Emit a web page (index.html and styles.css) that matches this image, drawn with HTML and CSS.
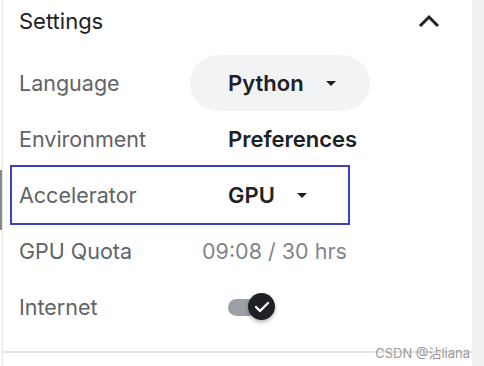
FILE: index.html
```html
<!DOCTYPE html>
<html>
<head>
	<meta charset="utf-8">
	<title>Settings</title>
	<link rel="stylesheet" href="styles.css">
</head>
<body>
	<div class="page">
		<div class="panel">
			<div class="scrollThumb"></div>
			<div class="header">
				<h2 class="heading">Settings</h2>
				<svg class="chevron" width="22" height="14" viewBox="0 0 22 14">
					<polyline points="2,12 11,3 20,12" fill="none" stroke="#202124" stroke-width="3"/>
				</svg>
			</div>

			<div class="row">
				<span class="label">Language</span>
				<div class="pill">
					<span class="value">Python</span>
					<span class="caret"></span>
				</div>
			</div>

			<div class="row">
				<span class="label">Environment</span>
				<span class="value indent">Preferences</span>
			</div>

			<div class="row highlight">
				<span class="label">Accelerator</span>
				<div class="select indent">
					<span class="value">GPU</span>
					<span class="caret"></span>
				</div>
			</div>

			<div class="row">
				<span class="label">GPU Quota</span>
				<span class="quota">09:08 / 30 hrs</span>
			</div>

			<div class="row">
				<span class="label">Internet</span>
				<div class="toggle indent">
					<div class="track"></div>
					<div class="knob">
						<svg width="16" height="12" viewBox="0 0 16 12">
							<polyline points="2,6 6,10 14,2" fill="none" stroke="white" stroke-width="2.4" stroke-linecap="round" stroke-linejoin="round"/>
						</svg>
					</div>
				</div>
			</div>

			<div class="divider"></div>
			<div class="watermark">CSDN @沾liana</div>
		</div>
		<div class="sidebar"></div>
	</div>
</body>
</html>
```

FILE: styles.css
```css
body {
	margin: 0;
	padding: 0;
	background-color: white;
	font-family: Inter, "Noto Sans CJK SC", sans-serif;
}

.page {
	display: flex;
	height: 366px;
}

.panel {
	position: relative;
	flex: 1;
	margin-left: 2px;
	border-left: 1px solid #e6e6e6;
}

.scrollThumb {
	position: absolute;
	left: -3px;
	top: 170px;
	width: 2px;
	height: 60px;
	background: #8a8a8a;
}

.sidebar {
	width: 12px;
	background-color: #f1f1f1;
}

.header {
	display: flex;
	align-items: center;
	justify-content: space-between;
	height: 42px;
	padding: 0 32px 0 16px;
	margin-bottom: 13px;
}

.heading {
	margin: 0;
	font-size: 22px;
	font-weight: 400;
	color: #202124;
}

.row {
	display: flex;
	align-items: center;
	height: 56px;
	padding-left: 16px;
}

.label {
	width: 171px;
	font-size: 21.5px;
	color: #5f6368;
}

.value {
	font-size: 22px;
	font-weight: 600;
	color: #202124;
}

.indent {
	margin-left: 38px;
}

.pill {
	display: flex;
	align-items: center;
	width: 142px;
	height: 56px;
	padding-left: 38px;
	border-radius: 28px;
	background-color: #f1f3f4;
}

.select {
	display: flex;
	align-items: center;
}

.caret {
	width: 0;
	height: 0;
	margin-left: 22px;
	border-left: 5px solid transparent;
	border-right: 5px solid transparent;
	border-top: 5px solid #202124;
}

.highlight {
	width: 329px;
	height: 56px;
	margin: -2px 0 -2px 7px;
	padding-left: 7px;
	border: 2px solid #3a3fc6;
}

.quota {
	margin-left: 12px;
	font-size: 21.5px;
	color: #80868b;
}

.toggle {
	position: relative;
	width: 50px;
	height: 28px;
	display: flex;
	align-items: center;
}

.track {
	width: 32px;
	height: 17px;
	border-radius: 9px;
	background-color: #9aa0a6;
}

.knob {
	position: absolute;
	left: 20px;
	top: 0;
	width: 27px;
	height: 27px;
	border-radius: 50%;
	background-color: #202124;
	box-shadow: 0 2px 4px rgba(0, 0, 0, 0.3);
	display: flex;
	align-items: center;
	justify-content: center;
}

.divider {
	margin-top: 16px;
	height: 2px;
	background-color: #e3e3e3;
}

.watermark {
	position: absolute;
	right: 2px;
	top: 343px;
	font-size: 13px;
	color: #9a9a9a;
}
```
